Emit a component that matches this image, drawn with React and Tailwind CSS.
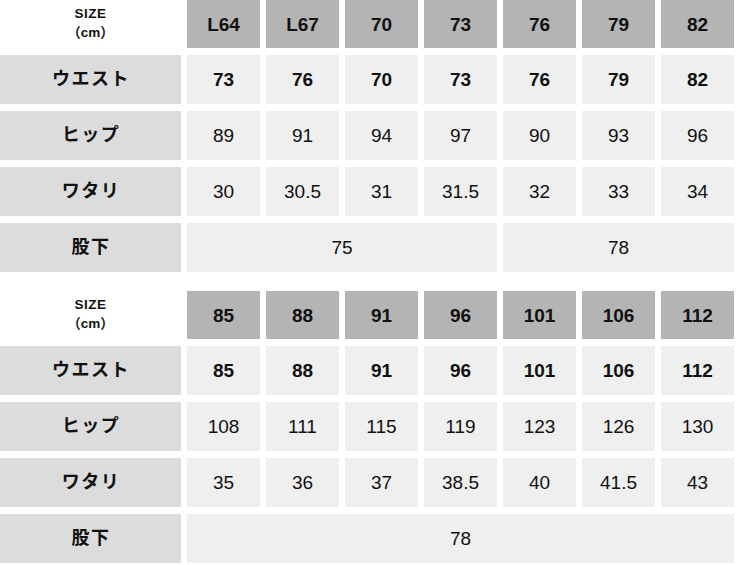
const font = { fontFamily: '"Liberation Sans", "Noto Sans CJK JP", Arial, sans-serif' }

const tables = [
    {
        sizes: ['L64', 'L67', '70', '73', '76', '79', '82'],
        waist: ['73', '76', '70', '73', '76', '79', '82'],
        hip: ['89', '91', '94', '97', '90', '93', '96'],
        thigh: ['30', '30.5', '31', '31.5', '32', '33', '34'],
        inseam: [{ value: '75', span: 4 }, { value: '78', span: 3 }],
    },
    {
        sizes: ['85', '88', '91', '96', '101', '106', '112'],
        waist: ['85', '88', '91', '96', '101', '106', '112'],
        hip: ['108', '111', '115', '119', '123', '126', '130'],
        thigh: ['35', '36', '37', '38.5', '40', '41.5', '43'],
        inseam: [{ value: '78', span: 7 }],
    },
]

const spanClass = {
    3: 'col-span-3',
    4: 'col-span-4',
    7: 'col-span-7',
}

function Label({ children }) {
    return (
        <div className="bg-[#dcdcdc] flex items-center justify-center text-[18px] font-bold tracking-[1.5px] pl-[1px] text-[#111]">
            {children}
        </div>
    )
}

function Cell({ children, bold, className = '' }) {
    return (
        <div className={`bg-[#efefef] flex items-center justify-center text-[19px] text-[#111] pt-[1px] ${bold ? 'font-bold' : ''} ${className}`}>
            {children}
        </div>
    )
}

function SizeTable({ data }) {
    return (
        <div className="grid grid-cols-[181px_repeat(7,73px)] grid-rows-[48px_repeat(4,49px)] gap-x-[6px] gap-y-[7px]">
            {/* Header */}
            <div className="flex flex-col items-center justify-center text-[13.5px] font-bold leading-[19px] text-[#111] pb-[2px]">
                <span className="tracking-[0.5px]">SIZE</span>
                <span>（cm）</span>
            </div>
            {data.sizes.map((s, i) => (
                <div key={i} className="bg-[#b4b4b4] flex items-center justify-center text-[19px] font-bold text-[#111] pt-[2px]">
                    {s}
                </div>
            ))}

            <Label>ウエスト</Label>
            {data.waist.map((v, i) => <Cell key={i} bold>{v}</Cell>)}

            <Label>ヒップ</Label>
            {data.hip.map((v, i) => <Cell key={i}>{v}</Cell>)}

            <Label>ワタリ</Label>
            {data.thigh.map((v, i) => <Cell key={i}>{v}</Cell>)}

            <Label>股下</Label>
            {data.inseam.map((c, i) => <Cell key={i} className={spanClass[c.span]}>{c.value}</Cell>)}
        </div>
    )
}

export default function App() {
    return (
        <div className="w-[750px] h-[565px] bg-white overflow-hidden" style={font}>
            <SizeTable data={tables[0]} />
            <div className="mt-[19px]">
                <SizeTable data={tables[1]} />
            </div>
        </div>
    )
}
